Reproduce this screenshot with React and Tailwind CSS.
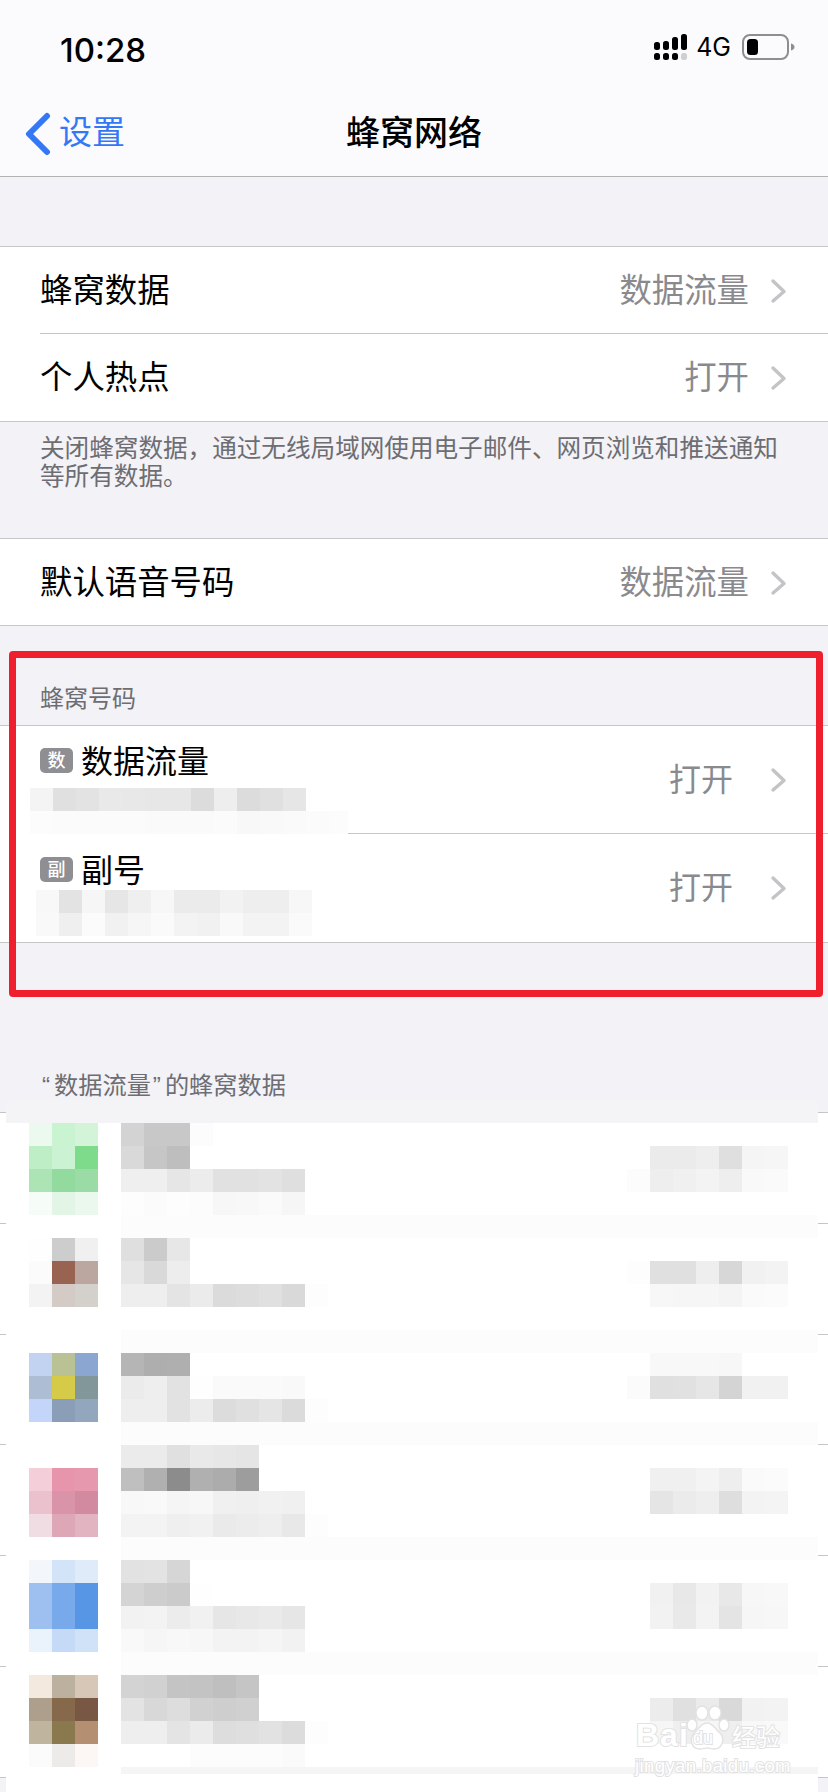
import React from "react";

const CELL = 23;

// pixelated (redacted) blocks: [row, col, colors]
const LIST_BLOCKS = [
  [1, 1, ["#ecf9ef", "#caf3d1", "#d4f4da"]],
  [1, 5, ["#d3d3d3", "#c8c8c8", "#c8c8c8", "#fcfcfc"]],
  [2, 1, ["#bdeec6", "#cbf3d3", "#7edb8c"]],
  [2, 5, ["#d9d9d9", "#c6c6c6", "#bebebe"]],
  [2, 28, ["#ebebeb", "#ebebeb", "#eeeeee", "#dfdfdf", "#f5f5f5", "#f6f6f6"]],
  [3, 1, ["#ace4b6", "#92da9e", "#9bdca6"]],
  [3, 5, ["#efefef", "#efefef", "#e6e6e6", "#ececec", "#e1e1e1", "#e1e1e1", "#e3e3e3", "#dfdfdf"]],
  [3, 27, ["#fcfcfc", "#eeeeee", "#f0f0f0", "#f3f3f3", "#eeeeee", "#f9f9f9", "#fafafa"]],
  [4, 1, ["#f6fcf7", "#e2f5e6", "#ebf8ed"]],
  [4, 5, ["#fdfdfd", "#fbfbfb", "#fdfdfd", "#fcfcfc", "#f7f7f7", "#f8f8f8", "#fafafa", "#f6f6f6"]],
  [6, 1, ["#fefefe", "#cdcdcd", "#f0f0f0"]],
  [6, 5, ["#dfdfdf", "#cbcbcb", "#e7e7e7"]],
  [7, 1, ["#fbfbfb", "#996351", "#bba7a0"]],
  [7, 5, ["#e6e6e6", "#d9d9d9", "#ededed"]],
  [7, 27, ["#fdfdfd", "#e0e0e0", "#e0e0e0", "#eeeeee", "#d7d7d7", "#f1f1f1", "#f3f3f3"]],
  [8, 1, ["#f3f3f3", "#d4cbc7", "#d4d0cb"]],
  [8, 5, ["#eeeeee", "#eeeeee", "#e4e4e4", "#ebebeb", "#dbdbdb", "#dddddd", "#e0e0e0", "#d9d9d9", "#fdfdfd"]],
  [8, 28, ["#f7f7f7", "#f6f6f6", "#f6f6f6", "#f4f4f4", "#fafafa", "#fbfbfb"]],
  [11, 1, ["#c2d3f2", "#bac295", "#8ba6d1"]],
  [11, 5, ["#b5b5b5", "#aeaeae", "#afafaf"]],
  [11, 28, ["#f8f8f8", "#f8f8f8", "#f8f8f8", "#f7f7f7"]],
  [12, 1, ["#adbdd4", "#d6ca49", "#82979a"]],
  [12, 5, ["#ebebeb", "#eeeeee", "#e2e2e2", "#fefefe", "#fafafa", "#fafafa", "#fafafa", "#f9f9f9"]],
  [12, 27, ["#fbfbfb", "#e0e0e0", "#e1e1e1", "#e6e6e6", "#d4d4d4", "#f1f1f1", "#f1f1f1"]],
  [13, 1, ["#c3d5f8", "#8a9eb8", "#92a6bd"]],
  [13, 5, ["#eeeeee", "#eeeeee", "#e2e2e2", "#ececec", "#dcdcdc", "#e0e0e0", "#e5e5e5", "#dbdbdb", "#fdfdfd"]],
  [15, 5, ["#ebebeb", "#ebebeb", "#e0e0e0", "#e9e9e9", "#e7e7e7", "#e5e5e5"]],
  [16, 1, ["#f4cfda", "#e695ac", "#e699ae"]],
  [16, 5, ["#bfbfbf", "#b0b0b0", "#8c8c8c", "#b0b0b0", "#acacac", "#9d9d9d"]],
  [16, 28, ["#f0f0f0", "#f0f0f0", "#f4f4f4", "#eeeeee", "#fafafa", "#fbfbfb"]],
  [17, 1, ["#ebc1ce", "#d994aa", "#d28aa0"]],
  [17, 5, ["#f8f8f8", "#f9f9f9", "#f5f5f5", "#f7f7f7", "#f0f0f0", "#efefef", "#f1f1f1", "#f0f0f0"]],
  [17, 28, ["#e5e5e5", "#ebebeb", "#eeeeee", "#dedede", "#f3f3f3", "#f4f4f4"]],
  [18, 1, ["#f0dce3", "#dea7b8", "#e2b3c1"]],
  [18, 5, ["#f3f3f3", "#f3f3f3", "#efefef", "#f1f1f1", "#eaeaea", "#ececec", "#eeeeee", "#e8e8e8", "#fdfdfd"]],
  [20, 1, ["#f3f7fc", "#d3e4f9", "#dfebf9"]],
  [20, 5, ["#e2e2e2", "#e3e3e3", "#d6d6d6"]],
  [21, 1, ["#9dc0f0", "#78aaeb", "#5796e5"]],
  [21, 5, ["#d4d4d4", "#cecece", "#cbcbcb", "#fefefe"]],
  [21, 28, ["#f1f1f1", "#e8e8e8", "#f2f2f2", "#e8e8e8", "#f7f7f7", "#f8f8f8"]],
  [22, 1, ["#9dc0f0", "#78aaeb", "#5796e5"]],
  [22, 5, ["#f2f2f2", "#f3f3f3", "#ececec", "#f1f1f1", "#e6e6e6", "#e8e8e8", "#eaeaea", "#e6e6e6"]],
  [22, 28, ["#f2f2f2", "#e9e9e9", "#f3f3f3", "#e4e4e4", "#f6f6f6", "#f7f7f7"]],
  [23, 1, ["#eaf2fc", "#c4daf6", "#d0e2f8"]],
  [23, 5, ["#f9f9f9", "#f6f6f6", "#f8f8f8", "#f7f7f7", "#f3f3f3", "#f3f3f3", "#f5f5f5", "#f2f2f2"]],
  [25, 1, ["#f3e9df", "#bcb09f", "#d6c7b6"]],
  [25, 5, ["#d3d3d3", "#d1d1d1", "#c4c4c4", "#c3c3c3", "#bfbfbf", "#c5c5c5"]],
  [26, 1, ["#ae9f8c", "#85694a", "#785744"]],
  [26, 5, ["#e3e3e3", "#d8d8d8", "#dddddd", "#d1d1d1", "#cecece", "#d0d0d0"]],
  [26, 28, ["#ececec", "#e0e0e0", "#ebebeb", "#d9d9d9", "#f2f2f2", "#f3f3f3"]],
  [27, 1, ["#bfb59f", "#8a794e", "#b58f72"]],
  [27, 5, ["#eeeeee", "#eeeeee", "#e4e4e4", "#ebebeb", "#dddddd", "#dfdfdf", "#e2e2e2", "#dcdcdc", "#fdfdfd"]],
  [27, 28, ["#f6f6f6", "#efefef", "#f6f6f6", "#efefef", "#f8f8f8", "#f9f9f9"]],
  [28, 1, ["#fbfbfb", "#ecebe9", "#fcf7f4"]],
  [28, 8, ["#fcfcfc", "#fcfcfc", "#fcfcfc", "#fcfcfc", "#fafafa"]],
];

// faint full-width strips between the blurred rows
const LIST_BANDS = [5, 10, 14, 19, 24];

const SIM_ONE = [
  [0, 0, ["#f4f4f4", "#e0e0e0", "#e3e3e3", "#e9e9e9", "#e8e8e8", "#e7e7e7", "#e7e7e7", "#dcdcdc", "#eeeeee", "#dcdcdc", "#e0e0e0", "#e6e6e6"]],
  [1, 0, ["#fcfcfc", "#fbfbfb", "#fbfbfb", "#fbfbfb", "#fbfbfb", "#fafafa", "#fafafa", "#fafafa", "#fbfbfb", "#f8f8f8", "#f9f9f9", "#fafafa", "#fbfbfb", "#fcfcfc"]],
];

const SIM_TWO = [
  [0, 0, ["#f8f8f8", "#e3e3e3", "#f6f6f6", "#e6e6e6", "#efefef", "#f7f7f7", "#ebebeb", "#ebebeb", "#f2f2f2", "#eeeeee", "#eeeeee", "#f7f7f7"]],
  [1, 0, ["#f9f9f9", "#efefef", "#fbfbfb", "#f1f1f1", "#f6f6f6", "#fafafa", "#f3f3f3", "#f1f1f1", "#f9f9f9", "#f3f3f3", "#f3f3f3", "#fafafa"]],
];

const Mosaic = ({ blocks, width, height, className, children }) => (
  <svg width={width} height={height} className={className} shapeRendering="crispEdges">
    {children}
    {blocks.flatMap(([row, col, colors]) =>
      colors.map((c, i) => (
        <rect key={`${row}-${col + i}`} x={(col + i) * CELL} y={row * CELL} width={CELL} height={CELL} fill={c} />
      ))
    )}
  </svg>
);

const Chevron = () => (
  <svg width="18" height="26" viewBox="0 0 18 26" fill="none" className="shrink-0">
    <path d="M3 3l11 10.500L3 23" stroke="#c4c4c7" strokeWidth="3.4" strokeLinecap="round" strokeLinejoin="round" />
  </svg>
);

const SignalIcon = () => (
  <svg width="35" height="28" viewBox="0 0 35 28" className="mr-[8px]">
    <rect x="1" y="9" width="6" height="8" rx="2.500" fill="#000" />
    <rect x="10" y="8" width="6" height="9" rx="2.500" fill="#000" />
    <rect x="19" y="4" width="6" height="13" rx="2.500" fill="#000" />
    <rect x="28" y="1" width="6" height="16" rx="2.500" fill="#000" />
    <rect x="1" y="20" width="6" height="7" rx="2.500" fill="#000" />
    <rect x="10" y="20" width="6" height="7" rx="2.500" fill="#000" />
    <rect x="19" y="20" width="6" height="7" rx="2.500" fill="#000" />
    <rect x="28" y="20" width="6" height="7" rx="2.500" fill="#cfcfcf" />
  </svg>
);

const BatteryIcon = () => (
  <svg width="53" height="26" viewBox="0 0 53 26">
    <rect x="1" y="1" width="45" height="24" rx="7" fill="none" stroke="#8e8e8e" strokeWidth="2" />
    <rect x="5" y="5" width="11" height="16" rx="3.500" fill="#000" />
    <path d="M49 9.500c2 .4 3.500 1.800 3.500 3.500s-1.500 3.100-3.500 3.500z" fill="#8e8e8e" />
  </svg>
);

const Row = ({ title, value, inset, className = "h-[87px] pt-[1px]" }) => (
  <div className={`flex items-center pl-[40px] pr-[40px] ${className} ${inset ? "relative" : ""}`}>
    <span className="text-[32.400px] leading-[40px] text-black">{title}</span>
    <span className="ml-auto mr-[21px] text-[32.400px] leading-[40px] text-[#8a8a8e]">{value}</span>
    <Chevron />
    {inset && <div className="absolute bottom-0 left-[40px] right-0 h-px bg-[#c6c6c8]" />}
  </div>
);

const SimRow = ({ tag, title, className, children }) => (
  <div className={`relative flex items-start pl-[40px] ${className}`}>
    <span className="mt-[4px] flex h-[25px] w-[33px] items-center justify-center rounded-[5px] bg-[#8e8e93] text-[18px] font-medium leading-none text-white">
      {tag}
    </span>
    <span className="ml-[8px] text-[32px] leading-[36px] text-black">{title}</span>
    {children}
  </div>
);

const SimValue = () => (
  <div className="absolute right-[40px] top-0 flex h-full items-center">
    <span className="mr-[37px] text-[32px] leading-[40px] text-[#8a8a8e]">打开</span>
    <Chevron />
  </div>
);

const outline = "[paint-order:stroke_fill] [-webkit-text-stroke:2px_#e2e2e2]";

const Watermark = () => (
  <div className="absolute left-[632px] top-[1702px] h-[76px] w-[156px] text-white">
    <span className={`absolute left-[4px] top-[14px] font-['Liberation_Sans',sans-serif] text-[32px] font-bold leading-[38px] tracking-[1px] ${outline}`}>
      Bai
    </span>
    <svg width="46" height="48" viewBox="0 0 46 48" fill="#ffffff" stroke="#e2e2e2" strokeWidth="1.4" className="absolute left-[52px] top-[2px]">
      <ellipse cx="8" cy="21" rx="5" ry="6" />
      <ellipse cx="18" cy="9" rx="6" ry="7" />
      <ellipse cx="31" cy="9" rx="6" ry="7" />
      <ellipse cx="40" cy="21" rx="5" ry="6" />
      <path d="M23 19c6 0 8 6 13 10 5 5 3 16-6 16-3 0-5-1-7-1s-4 1-7 1c-9 0-11-10-6-16 5-4 7-10 13-10z" />
    </svg>
    <span className={`absolute left-[61px] top-[25px] font-['Liberation_Sans',sans-serif] text-[18px] leading-[22px] ${outline}`}>
      du
    </span>
    <span className={`absolute left-[100px] top-[22px] text-[24px] leading-[28px] ${outline}`}>
      经验
    </span>
    <span className={`absolute left-[3px] top-[53px] font-['Liberation_Sans',sans-serif] text-[18.500px] leading-[22px] tracking-[0.4px] ${outline}`}>
      jingyan.baidu.com
    </span>
  </div>
);

export default function App() {
  return (
    <div className="relative h-[1792px] w-[828px] overflow-hidden bg-[#f2f2f7] font-['Liberation_Sans','Noto_Sans_CJK_SC',sans-serif]">
      {/* status + nav */}
      <div className="h-[177px] border-b border-[#b2b2b2] bg-[#fbfbfd]">
        <div className="flex h-[88px] items-start justify-between pl-[60px] pr-[33px] pt-[30px]">
          <span className="font-['Inter',sans-serif] text-[33px] font-medium leading-[40px] text-black">10:28</span>
          <div className="flex items-center pt-[3px]">
            <SignalIcon />
            <span className="mr-[11px] font-['Inter',sans-serif] text-[25px] leading-[28px] text-black">4G</span>
            <BatteryIcon />
          </div>
        </div>
        <div className="relative flex h-[88px] items-center pl-[24px] pt-[1px]">
          <svg width="28" height="44" viewBox="0 0 28 44" fill="none" className="mb-[-2px]">
            <path d="M23 4L5 22l18 18" stroke="#3478f6" strokeWidth="6" strokeLinecap="round" strokeLinejoin="round" />
          </svg>
          <span className="ml-[7px] text-[33px] leading-[40px] text-[#3478f6]">设置</span>
          <span className="absolute left-0 right-0 text-center text-[34px] font-medium leading-[40px] text-black">
            蜂窝网络
          </span>
        </div>
      </div>

      <div className="h-[69px]" />

      <div className="border-y border-[#c6c6c8] bg-white">
        <Row title="蜂窝数据" value="数据流量" inset />
        <Row title="个人热点" value="打开" />
      </div>

      <div className="h-[116px] px-[40px] pt-[13px] text-[24.600px] leading-[28px] text-[#6d6d72]">
        {"关闭蜂窝数据\uFF0C通过无线局域网使用电子邮件、网页浏览和推送通知等所有数据。"}
      </div>

      <div className="border-y border-[#c6c6c8] bg-white">
        <Row title="默认语音号码" value="数据流量" className="h-[86px] pt-[1px]" />
      </div>

      <div className="flex h-[99px] items-end px-[40px] pb-[12px] text-[24px] leading-[28px] text-[#6d6d72]">蜂窝号码</div>

      <div className="border-y border-[#c6c6c8] bg-white">
        <SimRow tag="数" title="数据流量" className="h-[108px] pt-[18px]">
          <SimValue />
          <div className="absolute bottom-0 left-[40px] right-0 h-px bg-[#c6c6c8]" />
          <Mosaic blocks={SIM_ONE} width={318} height={46} className="absolute left-[30px] top-[62px]" />
        </SimRow>
        <SimRow tag="副" title="副号" className="h-[108px] pt-[19px]">
          <SimValue />
          <Mosaic blocks={SIM_TWO} width={276} height={46} className="absolute left-[36px] top-[56px]" />
        </SimRow>
      </div>

      <div className="flex h-[169px] items-end px-[40px] pb-[12px] text-[24.200px] leading-[28px] text-[#6d6d72]">
        <span className="ml-[2px]">“</span>
        <span className="ml-[4px]">数据流量</span>
        <span className="ml-[2px] mr-[4px]">”</span>
        <span>的蜂窝数据</span>
      </div>

      <div className="border-t border-[#c6c6c8] bg-white">
        {[0, 1, 2, 3, 4, 5].map((i) => (
          <div key={i} className="h-[110.800px] border-b border-[#c6c6c8]" />
        ))}
      </div>

      {/* pixelated list content sits on top of the rows */}
      <Mosaic blocks={LIST_BLOCKS} width={812} height={692} className="absolute left-[6px] top-[1100px]">
        <rect x="0" y="0" width="812" height="23" fill="#f4f4f7" />
        <rect x="0" y="23" width="812" height="669" fill="#ffffff" />
        {LIST_BANDS.map((r) => (
          <rect key={r} x="115" y={r * CELL} width="697" height={CELL} fill="#fcfcfc" />
        ))}
        <rect x="115" y="667" width="697" height="7" fill="#f5f5f5" />
      </Mosaic>

      <Watermark />

      {/* red annotation box */}
      <div className="absolute left-[9px] top-[651px] h-[346px] w-[814px] rounded-[4px] border-[7px] border-[#f01f2e]" />
    </div>
  );
}
